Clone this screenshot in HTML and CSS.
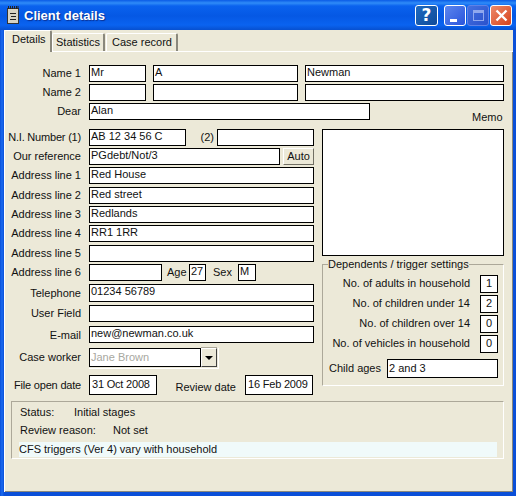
FILE: index.html
```html
<!DOCTYPE html>
<html lang="en">
<head>
    <meta charset="UTF-8">
    <title>Client details</title>
    <link rel="stylesheet" href="styles.css">
</head>
<body>
<div class="window">
    <!-- Title bar -->
    <div class="titlebar">
        <svg class="app-icon" width="16" height="18" viewBox="0 0 16 18">
            <rect x="2.5" y="2.5" width="11" height="15" fill="#d8d4c4" stroke="#333"/>
            <path d="M3.5 0v3M5.5 0v3M7.5 0v3M9.5 0v3M11.5 0v3M13 0v3" stroke="#222"/>
            <path d="M5 7.5h6M6 10.5h5M5 13.5h6" stroke="#222"/>
        </svg>
        <span class="title">Client details</span>
        <div class="caption-buttons">
            <div class="cap cap-help">?</div>
            <div class="cap cap-min"><span class="min-bar"></span></div>
            <div class="cap cap-max"><span class="max-box"></span></div>
            <div class="cap cap-close">
                <svg width="13" height="13" viewBox="0 0 13 13"><path d="M1.5 1.5l10 10M11.5 1.5l-10 10" stroke="#fff" stroke-width="2.4"/></svg>
            </div>
        </div>
    </div>

    <div class="body">
        <!-- Tabs -->
        <div class="tabs">
            <div class="tab active">Details</div>
            <div class="tab tab-stats">Statistics</div>
            <div class="tab tab-case">Case record</div>
        </div>

        <div class="page">
            <!-- Names -->
            <div class="names">
                <div class="row name-row">
                    <div class="lbl">Name 1</div>
                    <div class="box w-title">Mr</div>
                    <div class="box w-first">A</div>
                    <div class="box w-last">Newman</div>
                </div>
                <div class="row name-row">
                    <div class="lbl">Name 2</div>
                    <div class="box w-title"></div>
                    <div class="box w-first"></div>
                    <div class="box w-last"></div>
                </div>
                <div class="row dear-row">
                    <div class="lbl">Dear</div>
                    <div class="box w-dear">Alan</div>
                    <div class="memo-lbl">Memo</div>
                </div>
            </div>

            <div class="columns">
                <!-- Left column -->
                <div class="left">
                    <div class="row">
                        <div class="lbl tight">N.I. Number (1)</div>
                        <div class="box w-ni">AB 12 34 56 C</div>
                        <div class="ni2">(2)</div>
                        <div class="box w-ni"></div>
                    </div>
                    <div class="row">
                        <div class="lbl">Our reference</div>
                        <div class="box w-ref">PGdebt/Not/3</div>
                        <div class="btn">Auto</div>
                    </div>
                    <div class="row"><div class="lbl">Address line 1</div><div class="box w-full">Red House</div></div>
                    <div class="row"><div class="lbl">Address line 2</div><div class="box w-full">Red street</div></div>
                    <div class="row"><div class="lbl">Address line 3</div><div class="box w-full">Redlands</div></div>
                    <div class="row"><div class="lbl">Address line 4</div><div class="box w-full">RR1 1RR</div></div>
                    <div class="row"><div class="lbl">Address line 5</div><div class="box w-full"></div></div>
                    <div class="row">
                        <div class="lbl">Address line 6</div>
                        <div class="box w-addr6"></div>
                        <div class="small-lbl age-lbl">Age</div>
                        <div class="box w-age">27</div>
                        <div class="small-lbl sex-lbl">Sex</div>
                        <div class="box w-sex">M</div>
                    </div>
                    <div class="row"><div class="lbl lbl-low">Telephone</div><div class="box w-full tall">01234 56789</div></div>
                    <div class="row"><div class="lbl">User Field</div><div class="box w-full"></div></div>
                    <div class="row"><div class="lbl lbl-low">E-mail</div><div class="box w-full">new@newman.co.uk</div></div>
                    <div class="row">
                        <div class="lbl lbl-low">Case worker</div>
                        <div class="combo">
                            <div class="box w-combo disabled">Jane Brown</div>
                            <div class="combo-btn"><span class="arrow"></span></div>
                        </div>
                    </div>
                    <div class="row dates">
                        <div class="lbl tight">File open date</div>
                        <div class="box w-date tight">31 Oct 2008</div>
                        <div class="small-lbl review-lbl">Review date</div>
                        <div class="box w-date tight">16 Feb 2009</div>
                    </div>
                </div>

                <!-- Right column -->
                <div class="right">
                    <div class="box memo"></div>
                    <fieldset class="group">
                        <legend>Dependents / trigger settings</legend>
                        <div class="dep"><span>No. of adults in household</span><div class="box num">1</div></div>
                        <div class="dep"><span>No. of children under 14</span><div class="box num">2</div></div>
                        <div class="dep"><span>No. of children over 14</span><div class="box num">0</div></div>
                        <div class="dep"><span>No. of vehicles in household</span><div class="box num">0</div></div>
                        <div class="ages"><span>Child ages</span><div class="box w-ages">2 and 3</div></div>
                    </fieldset>
                </div>
            </div>

            <!-- Status panel -->
            <div class="status">
                <div class="status-line"><span class="status-key">Status:</span><span>Initial stages</span></div>
                <div class="status-line"><span class="reason-key">Review reason:</span><span>Not set</span></div>
                <div class="strip">CFS triggers (Ver 4) vary with household</div>
            </div>
        </div>
    </div>
</div>
</body>
</html>
```

FILE: styles.css
```css
/* Page */
html, body {
    margin: 0;
    padding: 0;
}

body {
    width: 516px;
    height: 496px;
    overflow: hidden;
    font-family: "Liberation Sans", Arial, sans-serif;
    font-size: 11px;
    color: #111;
}

.tight {
    letter-spacing: -0.2px;
}

/* Window frame */
.window {
    width: 516px;
    height: 496px;
    box-sizing: border-box;
    padding: 0 3px 4px 4px;
    background: linear-gradient(to right, #0a4fd8 0, #1a6af0 2px, #0a4fd8 4px);
    background-color: #0a4fd8;
    display: flex;
    flex-direction: column;
}

/* Title bar */
.titlebar {
    height: 30px;
    margin: 0 -3px 0 -4px;
    padding: 0 4px 0 5px;
    display: flex;
    align-items: center;
    flex-shrink: 0;
    background: linear-gradient(to bottom, #0a5be6 0, #2f8cf8 3px, #0a62ee 6px, #0558e4 16px, #0a63f0 25px, #0750d0 30px);
}

.app-icon {
    flex-shrink: 0;
    margin-right: 3px;
}

.title {
    color: #fff;
    font-family: "Liberation Sans", sans-serif;
    font-weight: bold;
    font-size: 13px;
    text-shadow: 1px 1px 1px #0a2f90;
}

.caption-buttons {
    margin-left: auto;
    display: flex;
}

.cap {
    box-sizing: border-box;
    width: 22px;
    height: 21px;
    border: 1px solid #fff;
    border-radius: 3px;
    margin-left: 1px;
    display: flex;
    align-items: center;
    justify-content: center;
    color: #fff;
}

.cap-help {
    width: 23px;
    margin-right: 5px;
    background: linear-gradient(135deg, #1f6ac0, #0f4a9a);
    font-family: "DejaVu Sans", sans-serif;
    font-weight: bold;
    font-size: 17px;
}

.cap-min {
    background: linear-gradient(135deg, #5c86ee, #2a55dc);
    align-items: flex-end;
}

.min-bar {
    width: 7px;
    height: 3px;
    background: #fff;
    margin-bottom: 3px;
    margin-right: 3px;
}

.cap-max {
    background: linear-gradient(135deg, #4470e0, #2a52cc);
    border-color: #5f82e6;
}

.max-box {
    box-sizing: border-box;
    width: 11px;
    height: 11px;
    border: 1px solid #8fa8ee;
    border-top-width: 3px;
}

.cap-close {
    background: linear-gradient(135deg, #ec8a6a, #d8431c);
}

/* Body of the window */
.body {
    flex: 1;
    background: #ece9d8;
    display: flex;
    flex-direction: column;
}

.tabs {
    height: 21px;
    display: flex;
    align-items: flex-end;
    flex-shrink: 0;
}

.tab {
    box-sizing: border-box;
    height: 18px;
    padding: 1px 0 0 3px;
    background: #ece9d8;
    border-top: 1px solid #fff;
    border-left: 1px solid #fff;
    border-right: 2px solid #8a887c;
    border-radius: 2px 2px 0 0;
    line-height: 15px;
}

.tab.active {
    height: 22px;
    width: 48px;
    margin-bottom: -1px;
    padding: 1px 0 0 7px;
    position: relative;
    z-index: 1;
}

.tab-stats { width: 53px; }
.tab-case { width: 72px; margin-left: 1px; padding-left: 5px; }

.page {
    flex: 1;
    padding-top: 14px;
    box-shadow: inset 1px 1px 0 #fff, inset -1px -1px 0 #8a887c;
}

/* Rows */
.row {
    display: flex;
    align-items: flex-start;
}

.lbl {
    width: 77px;
    margin-right: 8px;
    text-align: right;
    line-height: 17px;
    flex-shrink: 0;
}

.lbl-low {
    line-height: 19px;
}

.box {
    box-sizing: border-box;
    height: 17px;
    border: 1px solid #000;
    background: #fff;
    padding: 0 0 0 1px;
    line-height: 13px;
    white-space: nowrap;
    overflow: hidden;
    flex-shrink: 0;
}

.tall {
    height: 18px;
}

/* Names block */
.name-row {
    height: 19px;
}

.dear-row {
    height: 26px;
}

.w-title { width: 57px; }
.w-first { width: 145px; margin-left: 7px; }
.w-last { width: 199px; margin-left: 7px; }
.w-dear { width: 281px; }

.memo-lbl {
    margin-left: 102px;
    line-height: 14px;
    padding-top: 7px;
}

/* Two columns */
.columns {
    display: flex;
}

.left {
    width: 318px;
    display: grid;
    grid-template-rows: 19px 19px 20px 19px 19px 20px 19px 20px 21px 21px 22px 27px 20px;
}

.right {
    width: 182px;
    display: flex;
    flex-direction: column;
}

.w-ni { width: 97px; }

.ni2 {
    width: 31px;
    text-align: right;
    padding-right: 3px;
    box-sizing: border-box;
    line-height: 17px;
}

.w-ref { width: 191px; }

.btn {
    box-sizing: border-box;
    width: 31px;
    height: 17px;
    margin-left: 3px;
    text-align: center;
    line-height: 15px;
    background: #ece9d8;
    border: 1px solid;
    border-color: #fff #716f64 #716f64 #fff;
}

.w-full { width: 225px; }
.w-addr6 { width: 73px; }

.small-lbl {
    line-height: 17px;
    flex-shrink: 0;
}

.age-lbl { margin-left: 5px; width: 22px; }
.sex-lbl { margin-left: 7px; width: 25px; }

.w-age { width: 17px; }
.w-sex { width: 18px; }

/* Case worker combo */
.combo {
    display: flex;
    height: 21px;
    padding: 0 1px 1px 0;
    border-right: 1px solid #fff;
    border-bottom: 1px solid #fff;
    box-sizing: border-box;
}

.w-combo {
    width: 112px;
    height: 19px;
    line-height: 16px;
}

.disabled {
    color: #a8a8a0;
}

.combo-btn {
    box-sizing: border-box;
    width: 16px;
    height: 19px;
    background: #ece9d8;
    border: 1px solid;
    border-color: #fff #404040 #404040 #fff;
    box-shadow: 0 -1px 0 #aca899;
    display: flex;
    align-items: center;
    justify-content: center;
}

.arrow {
    width: 0;
    height: 0;
    border-left: 4px solid transparent;
    border-right: 4px solid transparent;
    border-top: 4px solid #000;
}

/* Dates */
.dates .w-date {
    width: 68px;
    height: 20px;
    line-height: 16px;
    padding-left: 2px;
}

.dates .lbl {
    line-height: 20px;
}

.review-lbl {
    width: 88px;
    padding-right: 9px;
    text-align: right;
    box-sizing: border-box;
    line-height: 24px;
}

/* Memo and group */
.memo {
    width: 182px;
    height: 127px;
}

fieldset.group {
    box-sizing: border-box;
    width: 182px;
    height: 128px;
    margin: 2px 0 0 0;
    padding: 4px 5px 0 0;
    border: 1px solid;
    border-color: #aca899 #fff #fff #aca899;
    display: block;
}

.group legend {
    margin-left: 5px;
    padding: 0;
    line-height: 13px;
}

.dep {
    height: 20px;
    display: flex;
    justify-content: flex-end;
    align-items: flex-start;
}

.dep span {
    line-height: 17px;
    margin-right: 10px;
}

.num {
    width: 18px;
    height: 18px;
    text-align: center;
    line-height: 15px;
    padding: 0;
}

.ages {
    display: flex;
    justify-content: flex-end;
    margin-top: 4px;
}

.ages span {
    line-height: 19px;
    margin-right: 6px;
}

.w-ages {
    width: 111px;
    height: 19px;
    line-height: 16px;
}

/* Status panel */
.status {
    box-sizing: border-box;
    width: 493px;
    height: 58px;
    margin: 6px 0 0 7px;
    padding: 4px 7px 0 7px;
    border: 1px solid;
    border-color: #aca899 #fff #fff #aca899;
}

.status-line {
    height: 18px;
    line-height: 13px;
    padding-left: 1px;
    display: flex;
}

.status-key { width: 54px; }
.reason-key { width: 93px; }

.strip {
    height: 15px;
    line-height: 15px;
    background: #f0fafa;
    width: 478px;
}
```
